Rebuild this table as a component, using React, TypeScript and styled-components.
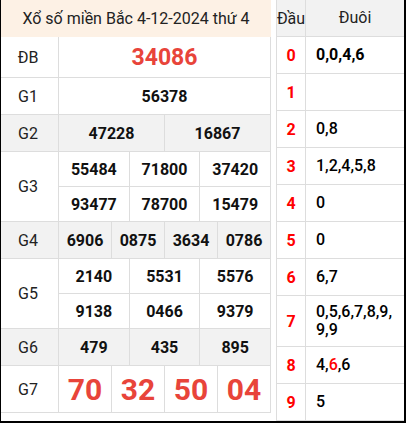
import React from "react";
import styled, { createGlobalStyle } from "styled-components";

const GlobalStyle = createGlobalStyle`
  html, body { margin: 0; padding: 0; background: #fff; }
  body { font-family: Roboto, "Noto Sans", "Liberation Sans", sans-serif; color: #222; }
  *, *::before, *::after { box-sizing: border-box; }
`;

const BORDER = "#dddddd";
const SHADE = "#f2f2f2";
const PRIZE_RED = "#e8443a";
const HEAD_RED = "#ff0000";

const Frame = styled.div`
  width: 406px;
  height: 423px;
  display: flex;
  align-items: flex-start;
  gap: 5px;
  border-left: 1px solid #000;
  border-right: 2px solid #000;
  border-bottom: 2px solid #000;
  background: #fff;
`;

/* ---------- result table ---------- */
const ResultTable = styled.div`
  width: 270px;
  display: flex;
  flex-direction: column;
`;

const Title = styled.div`
  height: 37px;
  background: #fdf1e5;
  display: flex;
  align-items: center;
  justify-content: center;
  font-size: 16px;
  color: #222;
  white-space: nowrap;
`;

const PrizeRow = styled.div<{ $shade?: boolean }>`
  display: grid;
  grid-template-columns: 58px 1fr;
  background: ${(p) => (p.$shade ? SHADE : "#fff")};
`;

const Label = styled.div`
  border-right: 1px solid ${BORDER};
  border-bottom: 1px solid ${BORDER};
  display: flex;
  align-items: center;
  justify-content: center;
  padding-right: 3px;
  font-size: 16px;
  color: #222;
`;

const Values = styled.div`
  display: flex;
  flex-direction: column;
`;

const NumberLine = styled.div<{ $cols: number; $h: number }>`
  display: grid;
  grid-template-columns: repeat(${(p) => p.$cols}, 1fr);
  height: ${(p) => p.$h}px;
`;

const NumCell = styled.div<{ $size: "normal" | "special" | "big" }>`
  border-right: 1px solid ${BORDER};
  border-bottom: 1px solid ${BORDER};
  display: flex;
  align-items: center;
  justify-content: center;
  font-weight: 700;
  font-size: ${(p) => (p.$size === "big" ? 30 : p.$size === "special" ? 23 : 16)}px;
  color: ${(p) => (p.$size === "normal" ? "#111" : PRIZE_RED)};
`;

/* ---------- loto table ---------- */
const LotoTable = styled.div`
  width: 128px;
  border-left: 1px solid ${BORDER};
  display: flex;
  flex-direction: column;
`;

const LotoRow = styled.div<{ $h: number; $header?: boolean }>`
  display: grid;
  grid-template-columns: 29px 1fr;
  height: ${(p) => p.$h}px;
  background: ${(p) => (p.$header ? SHADE : "#fff")};
`;

const HeadCell = styled.div<{ $header?: boolean }>`
  border-right: 1px solid ${BORDER};
  border-bottom: 1px solid ${BORDER};
  display: flex;
  align-items: center;
  justify-content: center;
  font-size: 16px;
  font-weight: ${(p) => (p.$header ? 400 : 700)};
  color: ${(p) => (p.$header ? "#222" : HEAD_RED)};
  white-space: nowrap;
`;

const TailCell = styled.div<{ $header?: boolean; $bold?: boolean }>`
  border-bottom: 1px solid ${BORDER};
  display: flex;
  flex-direction: column;
  justify-content: center;
  align-items: ${(p) => (p.$header ? "center" : "flex-start")};
  padding-left: ${(p) => (p.$header ? 0 : 10)}px;
  font-size: 16px;
  line-height: 18px;
  font-weight: ${(p) => (p.$bold ? 700 : p.$header ? 400 : 500)};
  color: ${(p) => (p.$header ? "#222" : "#000")};
`;

const Hot = styled.span`
  color: ${HEAD_RED};
`;

type Prize = {
  label: string;
  shade?: boolean;
  size?: "normal" | "special" | "big";
  lines: { h: number; nums: string[] }[];
};

const prizes: Prize[] = [
  { label: "ĐB", size: "special", lines: [{ h: 41, nums: ["34086"] }] },
  { label: "G1", lines: [{ h: 37, nums: ["56378"] }] },
  { label: "G2", shade: true, lines: [{ h: 37, nums: ["47228", "16867"] }] },
  {
    label: "G3",
    lines: [
      { h: 35, nums: ["55484", "71800", "37420"] },
      { h: 35, nums: ["93477", "78700", "15479"] },
    ],
  },
  { label: "G4", shade: true, lines: [{ h: 37, nums: ["6906", "0875", "3634", "0786"] }] },
  {
    label: "G5",
    lines: [
      { h: 35, nums: ["2140", "5531", "5576"] },
      { h: 35, nums: ["9138", "0466", "9379"] },
    ],
  },
  { label: "G6", shade: true, lines: [{ h: 37, nums: ["479", "435", "895"] }] },
  { label: "G7", size: "big", lines: [{ h: 47, nums: ["70", "32", "50", "04"] }] },
];

type Loto = { head: string; h: number; bold?: boolean; tail: React.ReactNode };

const lotos: Loto[] = [
  { head: "0", h: 37, bold: true, tail: "0,0,4,6" },
  { head: "1", h: 37, tail: "" },
  { head: "2", h: 37, tail: "0,8" },
  { head: "3", h: 37, tail: "1,2,4,5,8" },
  { head: "4", h: 37, tail: "0" },
  { head: "5", h: 37, tail: "0" },
  { head: "6", h: 37, tail: "6,7" },
  {
    head: "7",
    h: 51,
    tail: (
      <>
        <span>0,5,6,7,8,9,</span>
        <span>9,9</span>
      </>
    ),
  },
  {
    head: "8",
    h: 37,
    tail: (
      <span>
        4,<Hot>6</Hot>,6
      </span>
    ),
  },
  { head: "9", h: 37, tail: "5" },
];

export default function App() {
  return (
    <>
      <GlobalStyle />
      <Frame>
        <ResultTable>
          <Title>Xổ số miền Bắc 4-12-2024 thứ 4</Title>
          {prizes.map((p) => (
            <PrizeRow key={p.label} $shade={p.shade}>
              <Label>{p.label}</Label>
              <Values>
                {p.lines.map((line, i) => (
                  <NumberLine key={i} $cols={line.nums.length} $h={line.h}>
                    {line.nums.map((n, j) => (
                      <NumCell key={j} $size={p.size ?? "normal"}>
                        {n}
                      </NumCell>
                    ))}
                  </NumberLine>
                ))}
              </Values>
            </PrizeRow>
          ))}
        </ResultTable>
        <LotoTable>
          <LotoRow $h={37} $header>
            <HeadCell $header>Đầu</HeadCell>
            <TailCell $header>Đuôi</TailCell>
          </LotoRow>
          {lotos.map((l) => (
            <LotoRow key={l.head} $h={l.h}>
              <HeadCell>{l.head}</HeadCell>
              <TailCell $bold={l.bold}>{l.tail}</TailCell>
            </LotoRow>
          ))}
        </LotoTable>
      </Frame>
    </>
  );
}
